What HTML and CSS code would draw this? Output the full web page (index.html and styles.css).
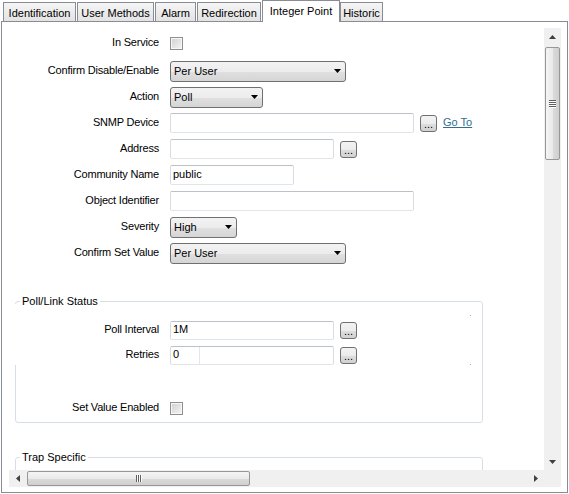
FILE: index.html
```
<!DOCTYPE html>
<html>
<head>
<meta charset="utf-8">
<link rel="stylesheet" href="styles.css">
</head>
<body>
<div class="tabs">
  <div class="tab w1">Identification</div>
  <div class="tab w2">User Methods</div>
  <div class="tab w3">Alarm</div>
  <div class="tab w4">Redirection</div>
  <div class="tab sel">Integer Point</div>
  <div class="tab w6">Historic</div>
</div>
<div class="panel">
  <div class="viewport">
    <div class="content">
      <div class="form main">
        <div class="lbl">In Service</div>
        <div class="ctl"><span class="check"></span></div>

        <div class="lbl">Confirm Disable/Enable</div>
        <div class="ctl"><div class="combo c-wide"><span class="ctext">Per User</span><svg class="arrow" width="7" height="4" viewBox="0 0 7 4"><path d="M0 0H7L3.5 4Z"/></svg></div></div>

        <div class="lbl">Action</div>
        <div class="ctl"><div class="combo c-action"><span class="ctext">Poll</span><svg class="arrow" width="7" height="4" viewBox="0 0 7 4"><path d="M0 0H7L3.5 4Z"/></svg></div></div>

        <div class="lbl">SNMP Device</div>
        <div class="ctl"><span class="input i-long"></span><span class="btn">...</span><a class="link">Go To</a></div>

        <div class="lbl">Address</div>
        <div class="ctl"><span class="input i-mid"></span><span class="btn">...</span></div>

        <div class="lbl">Community Name</div>
        <div class="ctl"><span class="input i-short">public</span></div>

        <div class="lbl">Object Identifier</div>
        <div class="ctl"><span class="input i-long"></span></div>

        <div class="lbl">Severity</div>
        <div class="ctl"><div class="combo c-sev"><span class="ctext">High</span><svg class="arrow" width="7" height="4" viewBox="0 0 7 4"><path d="M0 0H7L3.5 4Z"/></svg></div></div>

        <div class="lbl">Confirm Set Value</div>
        <div class="ctl"><div class="combo c-wide"><span class="ctext">Per User</span><svg class="arrow" width="7" height="4" viewBox="0 0 7 4"><path d="M0 0H7L3.5 4Z"/></svg></div></div>
      </div>

      <fieldset class="group g1">
        <legend>Poll/Link Status</legend>
        <div class="gform">
          <span class="mask"></span>
          <span class="dot dot1"></span>
          <span class="dot dot2"></span>
          <div class="lbl">Poll Interval</div>
          <div class="ctl"><span class="input i-mid gi">1M</span><span class="btn">...</span></div>

          <div class="lbl">Retries</div>
          <div class="ctl"><span class="input i-mid gi"><span class="spin">0</span></span><span class="btn">...</span></div>

          <div class="spacer"></div>

          <div class="lbl">Set Value Enabled</div>
          <div class="ctl"><span class="check"></span></div>
        </div>
      </fieldset>

      <fieldset class="group g2">
        <legend>Trap Specific</legend>
      </fieldset>
    </div>

    <div class="vscroll">
      <div class="sbtn"><svg width="7" height="4" viewBox="0 0 7 4"><path d="M3.5 0L7 4H0Z"/></svg></div>
      <div class="vthumb"><span class="vgrip"></span></div>
      <div class="fill"></div>
      <div class="sbtn"><svg width="7" height="4" viewBox="0 0 7 4"><path d="M0 0H7L3.5 4Z"/></svg></div>
    </div>

    <div class="hscroll">
      <div class="sbtn"><svg width="4" height="7" viewBox="0 0 4 7"><path d="M4 0V7L0 3.5Z"/></svg></div>
      <div class="hthumb"><span class="hgrip"></span></div>
      <div class="fill"></div>
      <div class="sbtn"><svg width="4" height="7" viewBox="0 0 4 7"><path d="M0 0L4 3.5L0 7Z"/></svg></div>
    </div>

    <div class="corner"></div>
  </div>
</div>
</body>
</html>
```
FILE: styles.css
```
* { box-sizing: border-box; }
html, body { margin: 0; padding: 0; }
body {
  width: 569px;
  height: 494px;
  overflow: hidden;
  background: #fff;
  font-family: "Liberation Sans", Arial, sans-serif;
  font-size: 11px;
  color: #000;
}

/* tabs */
.tabs {
  display: flex;
  align-items: flex-end;
  height: 21px;
  padding-left: 3px;
  position: relative;
  z-index: 2;
}
.tab {
  height: 19px;
  border: 1px solid #898c95;
  border-bottom: 0;
  background: linear-gradient(#f5f5f5, #e3e3e3);
  margin-right: 1px;
  text-align: center;
  padding-top: 2px;
  line-height: 16px;
  white-space: nowrap;
}
.w1 { width: 73px; }
.w2 { width: 77px; }
.w3 { width: 41px; }
.w4 { width: 64px; }
.w6 { width: 43px; }
.tab.sel {
  width: 78px;
  height: 22px;
  background: #fff;
  margin-bottom: -1px;
  margin-right: 0;
  padding-top: 1px;
  line-height: 18px;
}

/* panel */
.panel {
  margin-left: 1px;
  width: 567px;
  height: 472px;
  border: 1px solid #898c95;
  padding: 6px 6px 5px 7px;
}
.viewport {
  display: grid;
  grid-template-columns: 1fr 17px;
  grid-template-rows: 1fr 17px;
  height: 100%;
}
.content {
  overflow: hidden;
  min-width: 0;
  min-height: 0;
  background: #fff;
}

/* forms */
.main {
  display: grid;
  grid-template-columns: 150px auto;
  grid-template-rows: 29px repeat(8, 26px);
  column-gap: 11px;
  align-items: center;
  padding-top: 1px;
}
.lbl {
  text-align: right;
  white-space: nowrap;
  letter-spacing: -0.2px;
  line-height: 13px;
  padding-bottom: 2px;
}
.ctl {
  display: flex;
  align-items: center;
}

.check {
  display: block;
  width: 13px;
  height: 13px;
  border: 1px solid #8e8f8f;
  background: linear-gradient(135deg, #cdd0d4, #f5f5f5);
  box-shadow: inset 0 0 0 1px #f7f7f7;
}

.combo {
  display: flex;
  align-items: center;
  height: 21px;
  border: 1px solid #707070;
  border-radius: 3px;
  background: linear-gradient(#f3f3f3 0%, #ececec 50%, #e0e0e0 51%, #d5d5d5 100%);
  padding: 0 4px 0 3px;
  white-space: nowrap;
}
.ctext { flex: 1; }
.arrow { display: block; fill: #000; }
.c-wide { width: 176px; }
.c-action { width: 93px; }
.c-sev { width: 67px; }

.input {
  display: block;
  height: 20px;
  border: 1px solid;
  border-color: #bcc1c7 #d9dde2 #e1e5ea #d9dde2;
  border-radius: 2px;
  padding: 0 2px 2px;
  line-height: 16px;
  background: #fff;
  white-space: nowrap;
}
.i-long { width: 244px; }
.i-mid { width: 164px; }
.i-short { width: 124px; }
.input.gi { height: 19px; line-height: 15px; }
.spin {
  display: block;
  width: 27px;
  height: 17px;
  border-right: 1px solid #e3e6ea;
}

.btn {
  display: block;
  width: 17px;
  height: 17px;
  margin-left: 6px;
  border: 1px solid #707070;
  border-radius: 3px;
  background: linear-gradient(#f3f3f3 0%, #ececec 50%, #dedede 51%, #d1d1d1 100%);
  text-align: center;
  line-height: 17px;
  font-size: 11px;
}
.link {
  margin-left: 6px;
  color: #336e8e;
  text-decoration: underline;
  white-space: nowrap;
  padding-bottom: 2px;
  line-height: 13px;
}

/* group boxes */
.group {
  margin: 29px 0 0 6px;
  padding: 0;
  width: 468px;
  min-width: 0;
  border: 1px solid #d5dfe5;
  border-radius: 3px;
}
.group legend {
  margin-left: 4px;
  padding: 0 2px;
  line-height: 13px;
  font-size: 11px;
}
.gform {
  position: relative;
  display: grid;
  grid-template-columns: 143px auto;
  grid-template-rows: 25px 25px 28px 25px;
  column-gap: 11px;
  align-items: center;
  padding: 10px 0 1px;
}
.spacer { grid-column: 1 / -1; }
.mask {
  position: absolute;
  left: -1px;
  top: -4px;
  width: 1px;
  height: 61px;
  background: #fff;
}
.dot {
  position: absolute;
  left: 454px;
  width: 1px;
  height: 1px;
  background: #a9a9a9;
}
.dot1 { top: 7px; }
.dot2 { top: 56px; }
.g2 {
  margin-top: 28px;
  height: 200px;
}

/* scrollbars */
.vscroll, .hscroll, .corner { background: #f0f0f0; }
.vscroll {
  display: flex;
  flex-direction: column;
  align-items: center;
  min-height: 0;
}
.hscroll {
  display: flex;
  align-items: center;
  min-width: 0;
}
.fill { flex: 1; }
.sbtn {
  width: 17px;
  height: 17px;
  flex: none;
  display: flex;
  align-items: center;
  justify-content: center;
}
.sbtn svg { display: block; fill: #404040; }
.vthumb {
  margin-top: 2px;
  width: 15px;
  height: 113px;
  border: 1px solid #979797;
  border-radius: 2px;
  background: linear-gradient(90deg, #f4f4f4 0%, #eaeaea 50%, #dbdbdb 51%, #cfcfcf 100%);
  display: flex;
  align-items: center;
  justify-content: center;
}
.vgrip {
  display: block;
  width: 7px;
  height: 8px;
  background: repeating-linear-gradient(#5e5e5e 0 1px, #fdfdfd 1px 2px);
}
.hthumb {
  margin-left: 1px;
  width: 223px;
  height: 15px;
  border: 1px solid #979797;
  border-radius: 2px;
  background: linear-gradient(#f4f4f4 0%, #eaeaea 50%, #dbdbdb 51%, #cfcfcf 100%);
  display: flex;
  align-items: center;
  justify-content: center;
}
.hgrip {
  display: block;
  width: 6px;
  height: 7px;
  background: repeating-linear-gradient(90deg, #5e5e5e 0 1px, #fdfdfd 1px 2px);
}
```
